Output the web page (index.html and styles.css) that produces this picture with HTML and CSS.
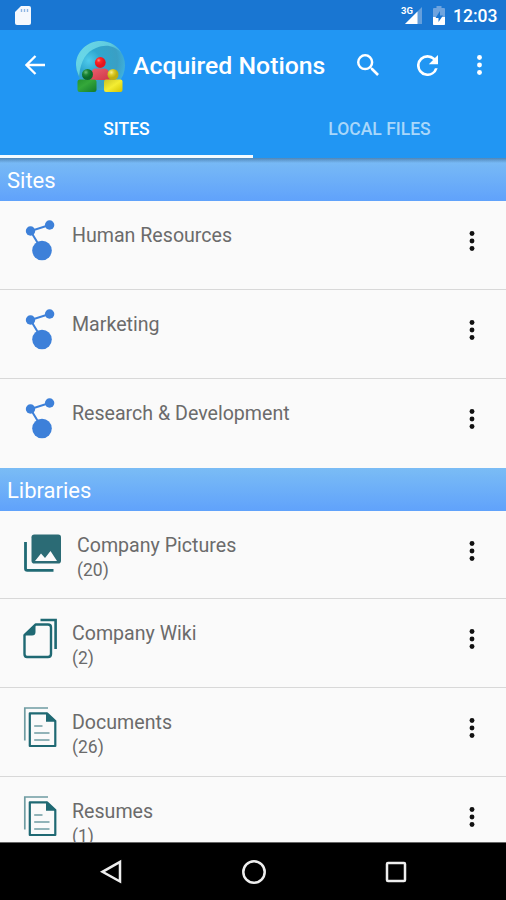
FILE: index.html
```html
<!DOCTYPE html>
<html lang="en">
<head>
<meta charset="utf-8">
<title>Acquired Notions</title>
<link rel="stylesheet" href="styles.css">
</head>
<body>
<svg class="defs" width="0" height="0" aria-hidden="true">
  <symbol id="dots" viewBox="0 0 8 24"><circle cx="4" cy="4.500" r="2.450"/><circle cx="4" cy="12" r="2.450"/><circle cx="4" cy="19.500" r="2.450"/></symbol>
  <symbol id="site" viewBox="0 0 48 48"><g fill="#3d80d9"><path d="M33.500 9L14.500 15L26 34" fill="none" stroke="#3d80d9" stroke-width="2"/><circle cx="33.600" cy="9" r="4.700"/><circle cx="14.500" cy="15" r="4.700"/><circle cx="26" cy="34.500" r="9.800"/></g></symbol>
  <symbol id="doc" viewBox="0 0 48 48"><path d="M8.800 37.500V5H32" fill="none" stroke="#6f9ca2" stroke-width="1.700"/><path d="M13.800 10.300H31L39.300 18V43H13.800Z" fill="none" stroke="#1f6973" stroke-width="2.200" stroke-linejoin="round"/><path d="M30 9.500L40 18.700H30Z" fill="#1f6973"/><path d="M18.200 23H26.500M18.200 30H33.500M18.200 37H33.500" stroke="#6f9ca2" stroke-width="1.700"/></symbol>
</svg>
<div class="screen">
  <header class="statusbar">
    <svg class="sd" viewBox="0 0 16 20" width="16" height="20"><path d="M6 0H14Q16 0 16 2V17Q16 19 14 19H2Q0 19 0 17V6Z" fill="#f5f8fd"/><path d="M6.500 3V6M9.500 3V6M12.500 3V6" stroke="#8db5e3" stroke-width="1.400"/></svg>
    <span class="net">3G</span>
    <svg class="signal" viewBox="0 0 18 18" width="18" height="18"><path d="M0 18L17 1V18Z" fill="#659fdc"/><path d="M0 18L12.500 5.500V18Z" fill="#fff"/></svg>
    <svg class="battery" viewBox="0 0 12 19" width="12" height="19"><path d="M3.500 0H8.500V2H11Q12 2 12 3V19H0V3Q0 2 1 2H3.500Z" fill="#6ea4df"/><path d="M0 11H12V18Q12 19 11 19H1Q0 19 0 18Z" fill="#fff"/><path d="M7 5L2.500 12H5.500V16L10 9.500H7Z" fill="#1976d2"/></svg>
    <span class="clock">12:03</span>
  </header>
  <div class="toolbar">
    <svg class="back" viewBox="0 0 20 20" width="20" height="20"><path d="M20 10H2M10.500 1L1.500 10L10.500 19" fill="none" stroke="#fff" stroke-width="2.300"/></svg>
    <svg class="logo" viewBox="0 0 50 52" width="50" height="52">
      <defs>
        <radialGradient id="globe" cx=".26" cy=".4" r=".78"><stop offset="0" stop-color="#4fcbec"/><stop offset=".3" stop-color="#2fa7cf"/><stop offset=".75" stop-color="#3a9fc4"/><stop offset="1" stop-color="#3fb3e0"/></radialGradient>
        <linearGradient id="shine" x2="1" y2=".6"><stop stop-color="#7fe6ee"/><stop offset=".6" stop-color="#68d6e6"/><stop offset="1" stop-color="#4fbcdc" stop-opacity=".3"/></linearGradient>
        <linearGradient id="red" x2="1" y2="1"><stop stop-color="#e8606d"/><stop offset="1" stop-color="#d03447"/></linearGradient>
        <linearGradient id="green" x2="1" y2="1"><stop stop-color="#24922d"/><stop offset=".4" stop-color="#35a83a"/><stop offset="1" stop-color="#137a2c"/></linearGradient>
        <linearGradient id="yellow" x2="1" y2="1"><stop stop-color="#c9c325"/><stop offset=".5" stop-color="#f4ed32"/><stop offset="1" stop-color="#d3c400"/></linearGradient>
        <radialGradient id="redball" cx=".35" cy=".3"><stop stop-color="#ff8a85"/><stop offset=".4" stop-color="#ff2824"/><stop offset="1" stop-color="#e6141f"/></radialGradient>
        <radialGradient id="greenball" cx=".35" cy=".3"><stop stop-color="#6cbf7a"/><stop offset=".5" stop-color="#1c8636"/><stop offset="1" stop-color="#0b692a"/></radialGradient>
        <radialGradient id="yellowball" cx=".35" cy=".3"><stop stop-color="#f8f08c"/><stop offset=".5" stop-color="#dccb25"/><stop offset="1" stop-color="#bfae10"/></radialGradient>
      </defs>
      <circle cx="24.500" cy="24.500" r="24.500" fill="url(#globe)"/>
      <path d="M0 24C0 10 12 0 24.500 0C34 0 42 5 45.500 12C38 4 29 3 20 7C10 11 5 19 3 35Q0 29 0 24Z" fill="url(#shine)" opacity=".8"/>
      <path d="M14 39Q15 27.500 19 27.500H29Q34 28 35 39Z" fill="url(#red)"/>
      <circle cx="24.300" cy="21.500" r="5.400" fill="url(#redball)"/>
      <rect x="1.500" y="38.500" width="19" height="12.500" rx="2.500" fill="url(#green)"/>
      <circle cx="11.500" cy="33.500" r="5.500" fill="url(#greenball)"/>
      <rect x="28" y="38.500" width="18.500" height="12.500" rx="2" fill="url(#yellow)"/>
      <circle cx="37" cy="33.500" r="5.500" fill="url(#yellowball)"/>
    </svg>
    <h1>Acquired Notions</h1>
    <svg class="search" viewBox="3 3 17.500 17.500" width="22" height="22"><path fill="#fff" d="M15.500 14h-.79l-.28-.27A6.470 6.470 0 0 0 16 9.500 6.500 6.500 0 1 0 9.500 16c1.610 0 3.090-.59 4.230-1.570l.27.28v.79l5 4.990L20.490 19zm-6 0C7.010 14 5 11.990 5 9.500S7.010 5 9.500 5 14 7.010 14 9.500 11.990 14 9.500 14z"/></svg>
    <svg class="refresh" viewBox="4 4 16 16" width="21" height="21"><path fill="#fff" d="M17.650 6.350A7.958 7.958 0 0 0 12 4a8 8 0 1 0 7.730 10h-2.080A5.990 5.990 0 0 1 12 18a6 6 0 1 1 0-12c1.660 0 3.140.69 4.220 1.780L13 11h7V4z"/></svg>
    <svg class="more light"><use href="#dots"/></svg>
  </div>
  <nav class="tabs"><span class="tab active">SITES</span><span class="tab">LOCAL FILES</span></nav>
  <main class="content">
    <h2 class="shaded">Sites</h2>
    <section class="sites">
      <div class="row"><svg class="icon"><use href="#site"/></svg><div class="label">Human Resources</div><svg class="more"><use href="#dots"/></svg></div>
      <div class="row"><svg class="icon"><use href="#site"/></svg><div class="label">Marketing</div><svg class="more"><use href="#dots"/></svg></div>
      <div class="row"><svg class="icon"><use href="#site"/></svg><div class="label">Research &amp; Development</div><svg class="more"><use href="#dots"/></svg></div>
    </section>
    <h2>Libraries</h2>
    <section>
      <div class="row wide"><svg class="icon" viewBox="0 0 48 48"><rect x="15.500" y="8.500" width="29.500" height="29" rx="2.800" fill="#2b6b75"/><path d="M9.500 16V42.500Q9.500 44.300 11.300 44.300H37.500" fill="none" stroke="#206a74" stroke-width="2.800"/><path d="M19 35L25 27.500L29 32L34.500 25L41 35Z" fill="#fafafa"/></svg><div class="label">Company Pictures<span>(20)</span></div><svg class="more"><use href="#dots"/></svg></div>
      <div class="row"><svg class="icon" viewBox="0 0 48 48"><path d="M19.500 10.500H32Q35 10.500 35 13.500V40Q35 43 32 43H11Q8.500 43 8.500 40V21Z" fill="none" stroke="#1f6973" stroke-width="2.400" stroke-linejoin="round"/><path d="M19.500 10V18Q19.500 21.500 16 21.500H8Z" fill="#1f6973"/><path d="M24.500 6H39.600V35" fill="none" stroke="#1f6973" stroke-width="2.600"/></svg><div class="label">Company Wiki<span>(2)</span></div><svg class="more"><use href="#dots"/></svg></div>
      <div class="row"><svg class="icon"><use href="#doc"/></svg><div class="label">Documents<span>(26)</span></div><svg class="more"><use href="#dots"/></svg></div>
      <div class="row"><svg class="icon"><use href="#doc"/></svg><div class="label">Resumes<span>(1)</span></div><svg class="more"><use href="#dots"/></svg></div>
    </section>
  </main>
  <footer class="navbar">
    <svg viewBox="0 0 26 26"><path d="M21 3V22.500L3.500 12.800Z"/></svg>
    <svg viewBox="0 0 26 26"><circle cx="13" cy="13" r="10.700"/></svg>
    <svg viewBox="0 0 26 26"><rect x="4" y="4" width="18" height="18" rx="1"/></svg>
  </footer>
</div>
</body>
</html>
```

FILE: styles.css
```css
* { box-sizing: border-box; }
body { margin: 0; font-family: Roboto, sans-serif; }
.defs { display: none; }
.screen { width: 506px; height: 900px; display: flex; flex-direction: column; overflow: hidden; background: #fafafa; }
svg { display: block; flex: none; }
.statusbar { height: 30px; flex: none; display: flex; background: #1976d2; color: #fff; padding-left: 15px; }
.sd { margin-top: 6px; }
.net { margin-left: 370px; margin-top: 5px; width: 4px; height: 12px; white-space: nowrap; font-size: 9.500px; font-weight: 700; line-height: 12px; }
.signal { margin-top: 6px; }
.battery { margin: 6px 0 0 10px; }
.clock { margin-left: 8px; font-size: 17.500px; font-weight: 500; line-height: 33px; }
.toolbar { height: 70px; flex: none; display: flex; align-items: center; background: #2196f3; padding-left: 25px; }
.logo { margin: 4px 0 0 31px; }
h1 { margin: 1px 0 0 7px; width: 224px; font-size: 24.800px; font-weight: 500; color: #fff; white-space: nowrap; }
.refresh { margin-left: 38px; }
.more { width: 8px; height: 24px; fill: #111; }
.light { width: 9px; fill: #fff; margin-left: 37px; }
.tabs { height: 58px; flex: none; display: flex; background: #2196f3; }
.tab { flex: 1; text-align: center; color: #a9d7fa; font-size: 17.500px; font-weight: 500; line-height: 59px; }
.active { color: #fff; border-bottom: 3px solid #f5fbff; }
.content { flex: 1; min-height: 0; overflow: hidden; }
h2 { margin: 0; height: 42.500px; padding-left: 7px; line-height: 45px; font-size: 22px; font-weight: 400; color: #fff; background: linear-gradient(#7abcf5, #60a2fb); }
.shaded { height: 43px; background: linear-gradient(rgba(40, 80, 120, .5), rgba(40, 80, 120, 0) 5px), linear-gradient(#7abcf5, #60a2fb); }
.row { height: 88.700px; display: flex; padding: 15px 30px 0 16px; border-bottom: 1px solid #d8d8d8; }
.sites .row { height: 89px; }
.sites .row:last-child { border-bottom-color: #fafafa; }
.icon { width: 48px; height: 48px; }
.label { flex: 1; margin: 7px 0 0 8px; color: #6b6b6b; font-size: 19.600px; line-height: 26px; }
.label span { display: block; font-size: 17.500px; line-height: 22.500px; }
.wide .label { margin-left: 13px; }
.row .more { margin-top: 13px; }
.navbar { height: 58px; flex: none; display: flex; align-items: center; justify-content: center; gap: 116px; background: #000; border-top: 1px solid #666; padding-left: 2px; }
.navbar svg { width: 26px; height: 26px; fill: none; stroke: #eee; stroke-width: 2.500; }
```
